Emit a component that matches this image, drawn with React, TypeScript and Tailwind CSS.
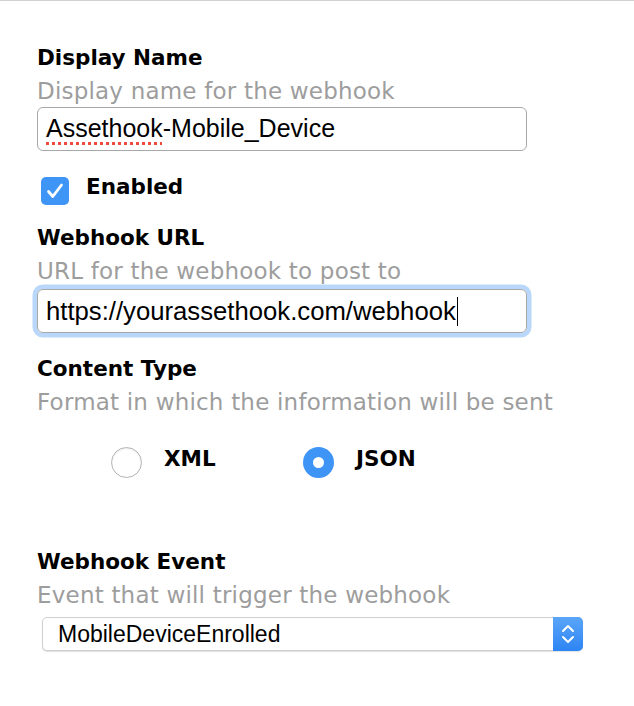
import React from "react";

const label = "text-[21.5px] font-bold leading-[26px] text-black";
const hint = "text-[23px] leading-[28px] tracking-[0.2px] text-[#9d9d9d]";

function Field({ title, help, top }: { title: string; help: string; top: string }) {
  return (
    <>
      <div className={`${label} ${top}`}>{title}</div>
      <div className={`${hint} mt-[6px]`}>{help}</div>
    </>
  );
}

function Radio({ checked, text }: { checked?: boolean; text: string }) {
  return (
    <div className="flex items-start gap-[22px]">
      {checked ? (
        <span className="flex h-[31px] w-[31px] items-center justify-center rounded-full bg-[#3e95f6]">
          <span className="h-[11px] w-[11px] rounded-full bg-white" />
        </span>
      ) : (
        <span className="h-[31px] w-[31px] rounded-full border border-[#b4b4b4] bg-white shadow-[inset_0_1px_2px_rgba(0,0,0,0.08)]" />
      )}
      <span className={`${label} -mt-[1px]`}>{text}</span>
    </div>
  );
}

export default function App() {
  return (
    <div className="min-h-screen border-t border-[#d2d2d2] bg-white font-['DejaVu_Sans',sans-serif]">
      <div className="flex flex-col items-start pl-[37px] pt-[44px]">
        <Field title="Display Name" help="Display name for the webhook" top="" />

        {/* Display name input */}
        <div className="mt-[2px] flex h-[44px] w-[490px] items-center rounded-[6px] border-[1.5px] border-[#a8a8a8] pl-[8px] font-['Liberation_Sans',Arial,sans-serif] text-[25px] text-black">
          <span className="underline decoration-[#f04a3e] decoration-dotted decoration-[3px] underline-offset-[5px]">
            Assethook
          </span>
          -Mobile_Device
        </div>

        {/* Enabled checkbox */}
        <div className="ml-[4px] mt-[26px] flex items-start gap-[17px]">
          <span className="flex h-[28px] w-[28px] items-center justify-center rounded-[5px] bg-[#3e95f6]">
            <svg width="22" height="22" viewBox="0 0 22 22" fill="none">
              <path d="M4.5 11.5l4.3 5L17.5 5" stroke="white" strokeWidth="2.8" strokeLinecap="round" strokeLinejoin="round" />
            </svg>
          </span>
          <span className={`${label} -mt-[3px]`}>Enabled</span>
        </div>

        <Field title="Webhook URL" help="URL for the webhook to post to" top="mt-[20px]" />

        {/* URL input, focused */}
        <div className="mt-[4px] flex h-[44px] w-[490px] items-center rounded-[6px] border-[1.5px] border-[#a8a8a8] pl-[8px] font-['Liberation_Sans',Arial,sans-serif] text-[25.7px] text-black shadow-[0_0_0_4.5px_#b9d7fa]">
          https://yourassethook.com/webhook
          <span className="ml-[1px] h-[29px] w-[1.5px] bg-black" />
        </div>

        <Field title="Content Type" help="Format in which the information will be sent" top="mt-[23px]" />

        <div className="ml-[74px] mt-[31px] flex">
          <div className="w-[192px]">
            <Radio text="XML" />
          </div>
          <Radio checked text="JSON" />
        </div>

        <Field title="Webhook Event" help="Event that will trigger the webhook" top="mt-[71px]" />

        {/* Event select */}
        <div className="ml-[5px] mt-[8px] flex h-[34px] w-[541px] items-stretch rounded-[5px] border border-[#cfcfcf] bg-white shadow-[0_1px_1px_rgba(0,0,0,0.12)]">
          <div className="flex flex-1 items-center pl-[15px] font-['Liberation_Sans',Arial,sans-serif] text-[23px] text-black">
            MobileDeviceEnrolled
          </div>
          <div className="-my-[1px] -mr-[1px] flex w-[30px] items-center justify-center rounded-r-[5px] bg-gradient-to-b from-[#5aa5f9] to-[#2c85f3]">
            <svg width="16" height="26" viewBox="0 0 16 26" fill="none">
              <path d="M3 10l5-5 5 5M3 16l5 5 5-5" stroke="white" strokeWidth="2" strokeLinecap="round" strokeLinejoin="round" />
            </svg>
          </div>
        </div>
      </div>
    </div>
  );
}
